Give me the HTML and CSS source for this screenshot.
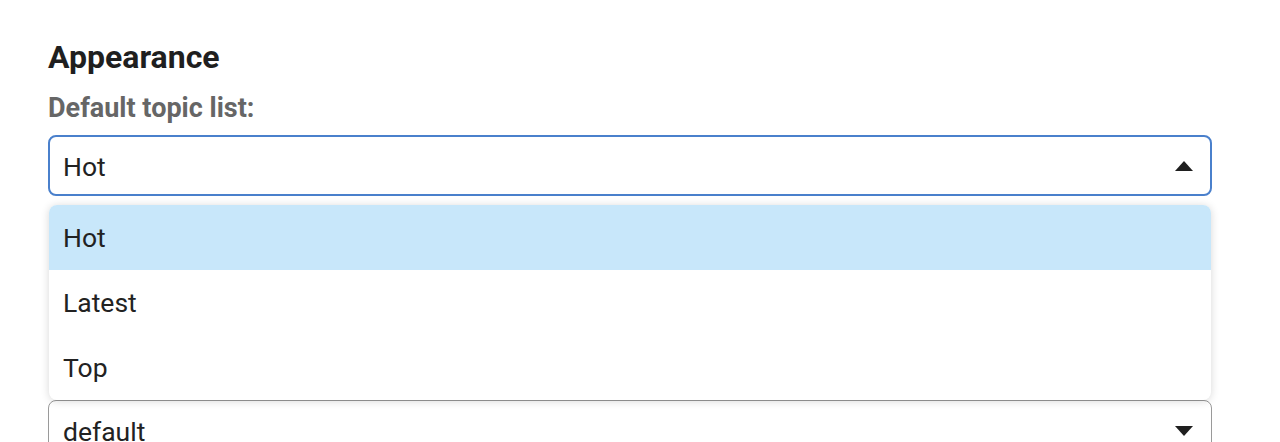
FILE: index.html
```html
<!DOCTYPE html>
<html>
<head>
<meta charset="utf-8">
<link rel="stylesheet" href="styles.css">
</head>
<body>
<div class="page">
  <h2 class="title">Appearance</h2>
  <div class="label">Default topic list:</div>
  <div class="select-wrap">
    <div class="select open">
      <span class="value">Hot</span>
      <svg class="caret" width="18" height="10" viewBox="0 0 18 10"><path d="M9 0 L18 10 L0 10 Z" fill="#1f1f1f"/></svg>
    </div>
    <ul class="menu">
      <li class="option active">Hot</li>
      <li class="option">Latest</li>
      <li class="option">Top</li>
    </ul>
  </div>
  <div class="select next">
    <span class="value">default</span>
    <svg class="caret" width="18" height="10" viewBox="0 0 18 10"><path d="M0 0 L18 0 L9 10 Z" fill="#1f1f1f"/></svg>
  </div>
</div>
</body>
</html>
```
FILE: styles.css
```css
html, body {
  margin: 0;
  padding: 0;
  background: #fff;
  font-family: Roboto, "Liberation Sans", sans-serif;
  color: #222;
}
.page {
  padding: 37px 68px 40px 48px;
  display: flex;
  flex-direction: column;
}
.title {
  margin: 0;
  font-size: 32px;
  font-weight: 700;
  line-height: 40px;
  color: #1f1f1f;
}
.label {
  margin-top: 15px;
  font-size: 27px;
  font-weight: 700;
  line-height: 32px;
  color: #666;
}
.select-wrap {
  position: relative;
  margin-top: 11px;
  margin-bottom: 204px;
}
.select {
  box-sizing: border-box;
  height: 61px;
  border: 2.5px solid #4a80cc;
  border-radius: 8px;
  display: flex;
  align-items: center;
  justify-content: space-between;
  padding: 0 17px 0 13px;
  font-size: 26.5px;
  color: #222;
  background: #fff;
}
.select .value {
  padding-top: 1px;
}
.menu {
  position: absolute;
  left: 1px;
  right: 1px;
  top: 70px;
  margin: 0;
  padding: 0;
  list-style: none;
  background: #fff;
  border-radius: 8px;
  box-shadow: 0 1px 8px rgba(0,0,0,0.16);
  overflow: hidden;
  z-index: 2;
}
.option {
  height: 65px;
  display: flex;
  align-items: center;
  padding-left: 14px;
  font-size: 26.5px;
  color: #222;
}
.option.active {
  background: #c8e7fa;
}
.select.next {
  border: 1px solid #9a9a9a;
  padding-left: 14px;
  padding-right: 18px;
}
```
